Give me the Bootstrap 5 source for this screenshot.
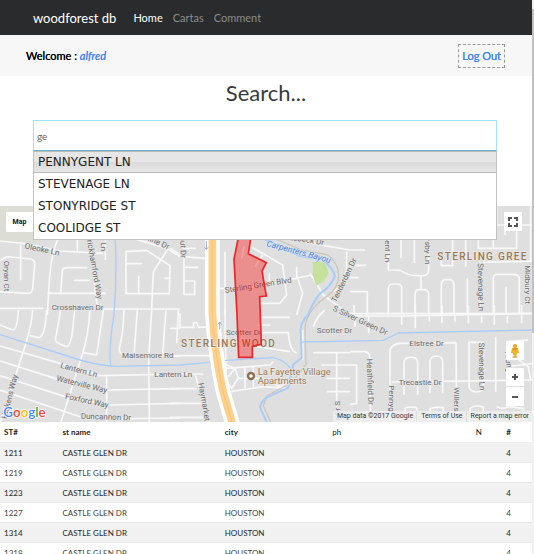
<!DOCTYPE html>
<html lang="en">
<head>
<meta charset="utf-8">
<meta name="viewport" content="width=device-width, initial-scale=1">
<title>woodforest db</title>
<link href="https://cdn.jsdelivr.net/npm/bootstrap@5.3.0/dist/css/bootstrap.min.css" rel="stylesheet">
<style>
body{font-family:Lato,sans-serif;font-size:11px;line-height:16px;color:#373a3c;overflow:hidden}
.page-scroll{width:2px;background:#f1f1f1;padding-top:9px}
.page-thumb{height:324px;background:#c1c1c1}
.site-nav{background:#292b2c;min-height:35px;padding:0 33px}
.site-nav .navbar-brand{font-size:13px;line-height:20px;margin-right:17px}
.site-nav .navbar-nav{gap:10px}
.site-nav .nav-link{font-size:11px;line-height:20px;color:#8b8c8d}
.site-nav .nav-link.active{color:#fff}
.user-bar{background:#f7f7f7;min-height:41px;padding:0 27px 0 26px;color:#000;text-shadow:0 0 0 currentColor}
.user-bar a{color:#4285f4;text-shadow:0 0 0 currentColor}
.logout-link{border:1px dashed #999;padding:3px}
.page-title{font-size:22px;line-height:34px;font-weight:400}
.search-wrap{margin:10px 35px 0 33px;z-index:5}
.search-wrap .form-control{height:31px;font-size:10px;padding:0 3px;border:1px solid #a0e4fa;border-bottom-color:#62b8d0;color:#666}
.search-wrap .form-control:focus{box-shadow:none}
.suggest-list{border:1px solid #c2c2c2;border-top:0}
.suggest-list .list-group-item{font-family:"DejaVu Sans",sans-serif;font-size:12px;line-height:22px;padding:0 4px;border:0;color:#212121}
.suggest-list .list-group-item.chosen{line-height:20px;background:linear-gradient(#e6e6e6 0 50%,#dadada 50%,#e6e6e6);border-top:1px solid #bbb;border-bottom:1px solid #bbb}
.map-area{height:216px;margin-top:55px;background:#dfdfdf;font-family:Roboto,sans-serif}
.map-area .map-drawing{width:100%;height:100%}
.map-btn{background:#fff;border:0;border-radius:1px;padding:0;color:#565656;width:18px;height:19px;display:flex;align-items:center;justify-content:center}
.map-type{left:6px;top:6px;width:36px;height:20px;padding-right:9px;font-size:7px;font-weight:700;color:#111}
.map-full{right:10px;top:6px}
.map-side{right:8px;bottom:16px}
.map-legal{right:0;bottom:0;background:#f0f0f0cc;font-size:7px;line-height:11px}
.map-legal>*{padding:0 3px 0 4px;color:#333;text-decoration:none}
.map-legal a{border-left:1px solid #ddd}
.area-label{letter-spacing:4px}
.people-table{font-size:8px;line-height:12px;margin:0;table-layout:fixed}
.people-table>:not(caption)>*>*{padding:4px 4px 3px;border-bottom:1px solid #e9e9e9;color:#444}
.people-table>thead>tr>th{color:#222;font-weight:700;padding-bottom:4px;border-bottom-color:#eceeef}
.people-table>thead>tr>th.fw-normal{font-weight:400}
.people-table>tbody>tr:nth-child(odd)>td{background:#f1f1f1;box-shadow:none}
</style>
<script src="https://cdn.jsdelivr.net/npm/bootstrap@5.3.0/dist/js/bootstrap.bundle.min.js"></script>
</head>
<body>
<div class="d-flex vh-100 overflow-hidden">
<div class="flex-grow-1 overflow-hidden">
  <nav class="site-nav navbar navbar-expand navbar-dark">
    <a class="navbar-brand p-0" href="#">woodforest db</a>
    <div class="navbar-nav">
      <a class="nav-link active p-0" href="#">Home</a>
      <a class="nav-link p-0" href="#">Cartas</a>
      <a class="nav-link p-0" href="#">Comment</a>
    </div>
  </nav>
  <div class="user-bar d-flex align-items-center justify-content-between">
    <span>Welcome : <a class="fst-italic text-decoration-none" href="#">alfred</a></span>
    <a class="logout-link text-decoration-none" href="#">Log Out</a>
  </div>
  <main>
    <h1 class="page-title text-center m-0">Search...</h1>
    <div class="search-wrap position-relative">
      <input class="form-control rounded-0" type="text" value="ge" aria-label="Search street">
      <div class="suggest-list list-group rounded-0 position-absolute start-0 end-0 top-100 bg-white">
        <button type="button" class="list-group-item list-group-item-action chosen">PENNYGENT LN</button>
        <button type="button" class="list-group-item list-group-item-action">STEVENAGE LN</button>
        <button type="button" class="list-group-item list-group-item-action">STONYRIDGE ST</button>
        <button type="button" class="list-group-item list-group-item-action">COOLIDGE ST</button>
      </div>
    </div>
    <div class="map-area position-relative overflow-hidden">
      <svg class="map-drawing d-block" viewBox="0 0 1596 648" preserveAspectRatio="xMidYMid slice" role="img" aria-label="Street map">
        <path fill="#dcddd5" d="M0 0H120V115L50 108 0 104z"/>
        <g fill="none" stroke="#f9f9f9" stroke-width="5" stroke-linejoin="round">
          <g transform="translate(0 -3)">
            <path d="M0 108L75 116 180 138 310 145M175 100C150 150 148 220 142 330M0 166L22 155 92 162Q106 166 104 180L98 250Q96 266 80 265L0 260M62 120V226M232 100V142M316 100V165M142 265H318M182 265L187 198Q188 188 200 188H262M222 226H270M268 100L292 310M0 310H130M310 312H540M378 268V140L440 136 510 182 508 266H386Q378 266 378 258M378 176H426M416 212V266M400 100L500 130M500 130L540 155M505 130L460 200 455 310M493 220H510"/>
          </g>
          <g transform="translate(510 -3)">
            <path d="M0 130L40 155 105 160M38 130H78M42 160V268H74V228H40M40 187H85M150 250L260 245 425 210M165 140V330M222 125L215 160M248 128L338 180 350 270 330 295H270M278 150L255 185M298 205V232M380 210L398 265 380 330M380 185V210M420 205L460 270 540 330M395 110L540 135M530 140V195L512 245 490 260"/>
          </g>
          <g transform="translate(1050 -3)">
            <path d="M0 135H45M0 181H48M0 218H25M0 260H52V330M12 300V330M115 100V195L150 196Q175 212 200 212H220Q234 212 236 195V95M213 212V254M195 320V268Q195 254 208 254H225Q236 256 236 270V325M115 325V250Q117 237 130 237H145Q155 239 155 250V325M153 100V160M193 100V174M274 165V182H308V100M347 100V185M274 325V240Q274 224 288 224H300Q312 226 312 240V325M352 220V325M385 100V130H500V60H560M430 130V100M400 172L560 168M390 170V310M430 325V220Q430 208 442 208H490Q508 208 508 222V325M468 245V325M0 326H560M440 60H510M440 5V60M465 60V90M542 0V170"/>
          </g>
          <g transform="translate(0 312)">
            <path d="M98 0Q95 50 65 140L0 339M55 0Q52 60 38 60L0 45M140 0Q135 85 115 83L88 76M182 0L166 90Q170 100 200 110 212 108 218 60L224 0M270 0Q265 80 245 140L182 339M310 0L290 135 250 128M0 108L180 160 300 197 540 192M0 153L165 205 320 240 540 236M0 197L195 260 330 285 540 280M0 240L245 322 300 327 540 324M320 197V339M372 0Q370 70 358 115 358 130 370 135L540 138M412 0L402 135M455 0L446 145 448 339M498 0L488 130M535 0L530 100"/>
          </g>
          <g transform="translate(510 312)">
            <path d="M0 55H30V10M0 137H120M0 192H100M0 236H80M0 280H95M0 322H100M75 192L120 339M72 52Q65 35 80 38L86 52 125 50M30 52H75M165 0L170 330M270 22H360M270 68H355Q360 125 380 129M250 108L360 125M265 45H300M170 165L195 175 205 205 185 235 170 215M170 175L300 165 310 155M205 205H275L330 230 350 220M225 170V235M250 170V230M180 245L280 230 350 235M195 175L175 200M430 50Q440 20 465 0M430 128H540M500 128V339M455 165H540M470 205H540M470 245H540M398 60V150"/>
          </g>
          <g transform="translate(1050 312)">
            <path d="M0 18H170L552 10M56 18V70M15 18V50M155 18V45M196 -15V55M238 18V35M276 -15V38M315 18V35M355 -15V40M395 18V38M433 -15V45M472 18V40M515 -15V40M0 125H45Q62 128 60 150L62 339M0 165H20V280L0 283M120 339V120Q125 103 150 100L318 98 320 339M125 216L552 210M162 254V155Q165 142 180 142 200 140 203 155V254M240 250V152Q244 138 262 138 278 140 278 155V250M357 230V97H400M357 230Q360 246 380 246 400 244 400 230V105M437 80V245M472 95L535 90M470 170L552 160M480 130L535 170 542 210M165 339V295Q180 288 200 293V339M240 339V297Q258 288 280 293V339M360 339V295Q380 282 400 292V339M440 290Q455 300 475 290L520 295V339"/>
          </g>
        </g>
        <path fill="#c4e29b" d="M938 168L975 169 986 200 973 225 948 239 938 205z"/>
        <g fill="none" stroke-linejoin="round">
          <path stroke="#cbc7ba" stroke-width="4" d="M830 100L900 130 985 147Q1017 175 1016 210T985 268Q920 310 915 365L918 475 875 530 800 570 790 600 812 648"/>
          <path stroke="#a9cdfa" stroke-width="6" d="M775 90L820 112 900 150 965 160Q1000 185 1005 210 990 245 960 262 935 295 925 325 900 350 902 375L905 455 880 475 865 545 800 575Q780 590 780 605L800 648"/>
          <path stroke="#a9cdfa" stroke-width="4" d="M345 90Q352 200 342 325 325 430 332 480M0 386L240 462Q300 480 350 481L540 477 620 470 680 463 820 455Q850 460 875 490M905 408L1150 403 1195 381 1596 372"/>
        </g>
        <path fill="none" stroke="#fff" stroke-width="44" d="M637 0V320Q645 450 670 560L698 655"/>
        <path fill="none" stroke="#fdd08b" stroke-width="23" d="M637 0V320Q645 450 670 560L698 655"/>
        <path fill="none" stroke="#f2bd75" stroke-width="2" d="M637 0V320Q645 450 670 560L698 655"/>
        <path fill="none" stroke="#9eacc4" stroke-width="3" d="M619 105V130M614 124L619 131 624 124M659 370V348M654 355L659 348 664 355"/>
        <g fill="#6a6a6a" stroke="#e6e6e6" stroke-width="4" paint-order="stroke" font-size="24">
          <text transform="translate(73 127) rotate(12)">Oleoke Ln</text>
          <text transform="translate(12 164) rotate(90)">Oryan Ct</text>
          <text transform="translate(258 88) rotate(80)">Brickhamford Way</text>
          <text transform="translate(303 47) rotate(90)">Scott Ln</text>
          <text transform="translate(405 85) rotate(25)">Pauline Dr</text>
          <text transform="translate(539 52) rotate(88)">Walnut Dr</text>
          <text x="155" y="313">Crosshaven Dr</text>
          <text transform="translate(676 261) rotate(-9)">Sterling Green Blvd</text>
          <text transform="translate(866 101) rotate(9)">Lubeck Dr</text>
          <text transform="translate(1008 290) rotate(-64)">Tenderden Dr</text>
          <text transform="translate(997 313) rotate(25)">S Silver Green Dr</text>
          <text x="678" y="387">Scotter Dr</text>
          <text x="950" y="381">Scotter Dr</text>
          <text transform="translate(1156 24) rotate(90)">Pennygent Ln</text>
          <text transform="translate(1274 46) rotate(90)">Willersby Ln</text>
          <text transform="translate(1433 172) rotate(89)">Stevenage Ln</text>
          <text transform="translate(1574 178) rotate(90)">Midbury Ct</text>
          <text x="366" y="457">Maisemore Rd</text>
          <text transform="translate(180 485) rotate(15)">Lantern Ln</text>
          <text x="463" y="514">Lantern Ln</text>
          <text transform="translate(168 524) rotate(14)">Waterville Way</text>
          <text transform="translate(194 578) rotate(12)">Foxford Way</text>
          <text transform="translate(242 638) rotate(2)">Duncannon Dr</text>
          <text transform="translate(20 640) rotate(-76)">Hickens Way</text>
          <text transform="translate(595 532) rotate(80)">Haymarket</text>
          <text transform="translate(1019 643) rotate(-90)">r Dr S</text>
          <text x="1228" y="420">Elstree Dr</text>
          <text x="1196" y="536">Trecastle Dr</text>
          <text transform="translate(1100 458) rotate(88)">Heathfield Dr</text>
          <text transform="translate(1168 538) rotate(90)">Pennyg</text>
          <text transform="translate(1363 544) rotate(90)">Willers</text>
          <text transform="translate(1436 410) rotate(89)">Stevenage Ln</text>
          <text transform="translate(1515 432) rotate(85)">Young</text>
        </g>
        <text fill="#5283d6" stroke="#d8e7fb" stroke-width="3" paint-order="stroke" font-size="26" font-style="italic" transform="translate(798 120) rotate(15)">Carpenters Bayou</text>
        <g fill="#96785a" stroke="#eeeae4" stroke-width="4" paint-order="stroke">
          <g class="area-label" font-size="30" font-weight="500"><text x="1312" y="162">STERLING GREE</text><text x="543" y="422">STERLING WOOD</text></g>
          <g font-size="28"><text x="773" y="507">La Fayette Village</text><text x="773" y="535">Apartments</text></g>
        </g>
        <circle cx="753" cy="510" r="9" fill="#fff" stroke="#8c6e54" stroke-width="7"/>
        <path fill="#ff0000" fill-opacity=".36" stroke="#e8272b" stroke-width="5" d="M718 80L702 160 711 325 716 454H757V421L784 415 779 272 799 270 786 195 799 170 745 143 755 80z"/>
        <text x="10" y="633" font-family="Lato,sans-serif" font-size="40" font-weight="600" stroke="#fff" stroke-width="5" paint-order="stroke"><tspan fill="#4285f4">G</tspan><tspan fill="#ea4335">o</tspan><tspan fill="#fbbc05">o</tspan><tspan fill="#4285f4">g</tspan><tspan fill="#34a853">l</tspan><tspan fill="#ea4335">e</tspan></text>
      </svg>
      <button type="button" class="map-btn map-type position-absolute">Map</button>
      <button type="button" class="map-btn map-full position-absolute" aria-label="Full screen"><svg width="12" height="12" viewBox="0 0 12 12" fill="none" stroke="#555" stroke-width="2"><path d="M2 5V2H5M7 2H10V5M10 7V10H7M5 10H2V7"/></svg></button>
      <div class="map-side position-absolute d-flex flex-column">
        <button type="button" class="map-btn mb-2" aria-label="Street view"><svg width="12" height="16" viewBox="0 0 12 16"><ellipse cx="6" cy="14" rx="3" ry="1" fill="#c8b88c"/><path fill="#f5b027" d="M3 5Q6 4 9 5L10 10 8 10 7 14H5L4 10H2z"/><circle cx="6" cy="3" r="2" fill="#f0a51e"/><path stroke="#c98317" d="M4 6H8"/></svg></button>
        <button type="button" class="map-btn border-bottom" aria-label="Zoom in"><svg width="8" height="8" viewBox="0 0 8 8" stroke="#555" stroke-width="2"><path d="M1 4H7M4 1V7"/></svg></button>
        <button type="button" class="map-btn" aria-label="Zoom out"><svg width="8" height="8" viewBox="0 0 8 8" stroke="#555" stroke-width="2"><path d="M1 4H7"/></svg></button>
      </div>
      <div class="map-legal position-absolute d-flex"><span>Map data ©2017 Google</span><a href="#">Terms of Use</a><a href="#">Report a map error</a></div>
    </div>
    <table class="people-table table table-striped">
      <colgroup><col style="width:11%"><col style="width:30.5%"><col style="width:20.2%"><col style="width:27%"><col style="width:5.7%"><col></colgroup>
      <thead><tr><th scope="col">ST#</th><th scope="col">st name</th><th scope="col">city</th><th scope="col" class="fw-normal">ph</th><th scope="col" class="fw-normal">N</th><th scope="col">#</th></tr></thead>
      <tbody>
        <tr><td>1211</td><td>CASTLE GLEN DR</td><td>HOUSTON</td><td></td><td></td><td>4</td></tr>
        <tr><td>1219</td><td>CASTLE GLEN DR</td><td>HOUSTON</td><td></td><td></td><td>4</td></tr>
        <tr><td>1223</td><td>CASTLE GLEN DR</td><td>HOUSTON</td><td></td><td></td><td>4</td></tr>
        <tr><td>1227</td><td>CASTLE GLEN DR</td><td>HOUSTON</td><td></td><td></td><td>4</td></tr>
        <tr><td>1314</td><td>CASTLE GLEN DR</td><td>HOUSTON</td><td></td><td></td><td>4</td></tr>
        <tr><td>1318</td><td>CASTLE GLEN DR</td><td>HOUSTON</td><td></td><td></td><td>4</td></tr>
      </tbody>
    </table>
  </main>
</div>
<div class="page-scroll flex-shrink-0" aria-hidden="true"><div class="page-thumb"></div></div>
</div>
</body>
</html>
